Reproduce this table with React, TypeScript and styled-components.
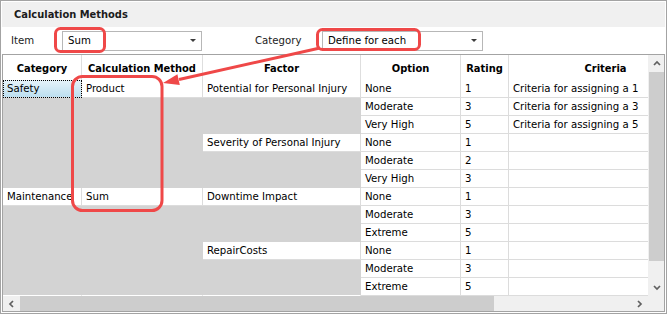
import React from "react";
import styled, { createGlobalStyle, css } from "styled-components";

const GlobalStyle = createGlobalStyle`
  html, body {
    margin: 0;
    padding: 0;
    background: #ffffff;
  }
  body {
    font-family: "DejaVu Sans Condensed", "Liberation Sans", sans-serif;
    font-size: 11.3px;
    color: #000;
  }
`;

type Entry = {
  category?: string;
  method?: string;
  factor?: string;
  option: string;
  rating: number;
  criteria?: string;
};

const rows: Entry[] = [
  { category: "Safety", method: "Product", factor: "Potential for Personal Injury", option: "None", rating: 1, criteria: "Criteria for assigning a 1" },
  { option: "Moderate", rating: 3, criteria: "Criteria for assigning a 3" },
  { option: "Very High", rating: 5, criteria: "Criteria for assigning a 5" },
  { factor: "Severity of Personal Injury", option: "None", rating: 1 },
  { option: "Moderate", rating: 2 },
  { option: "Very High", rating: 3 },
  { category: "Maintenance", method: "Sum", factor: "Downtime Impact", option: "None", rating: 1 },
  { option: "Moderate", rating: 3 },
  { option: "Extreme", rating: 5 },
  { factor: "RepairCosts", option: "None", rating: 1 },
  { option: "Moderate", rating: 3 },
  { option: "Extreme", rating: 5 },
];

const columns = ["Category", "Calculation Method", "Factor", "Option", "Rating", "Criteria"];

const Frame = styled.div`
  position: relative;
  box-sizing: border-box;
  width: 667px;
  height: 314px;
  border: 1px solid #a3a3a3;
  padding: 1px;
  display: flex;
  flex-direction: column;
  background: #fff;
`;

const TitleBar = styled.div`
  flex: none;
  height: 25px;
  display: flex;
  align-items: center;
  padding-left: 12px;
  background: #f0f0f0;
  font-size: 11px;
  font-weight: bold;
  color: #1c1c1c;
`;

const Toolbar = styled.div`
  flex: none;
  height: 27px;
  display: flex;
  align-items: center;
  padding-left: 9px;
  background: #fff;
`;

const FieldLabel = styled.span<{ $width: number; $offset?: number }>`
  width: ${(p) => p.$width}px;
  margin-left: ${(p) => p.$offset ?? 0}px;
  color: #1c1c1c;
`;

const Combo = styled.div<{ $width: number }>`
  box-sizing: border-box;
  width: ${(p) => p.$width}px;
  height: 20px;
  display: flex;
  align-items: center;
  padding-left: 5px;
  border: 1px solid #b7b7b7;
  background: #fff;
`;

const Caret = styled.span`
  margin-left: auto;
  margin-right: 5px;
  width: 0;
  height: 0;
  border-left: 3px solid transparent;
  border-right: 3px solid transparent;
  border-top: 3px solid #3c3c3c;
`;

const Grid = styled.div`
  flex: 1;
  display: flex;
  flex-direction: column;
  border: 1px solid #a3a3a3;
  background: #d3d3d3;
  overflow: hidden;
`;

const GridMain = styled.div`
  flex: 1;
  display: flex;
  min-height: 0;
`;

const Viewport = styled.div`
  width: 645px;
  flex: none;
  overflow: hidden;
`;

const columnTemplate = css`
  display: grid;
  grid-template-columns: 79px 121px 158px 100px 48px 194px;
  width: 700px;
`;

const HeaderRow = styled.div`
  ${columnTemplate};
  height: 25px;
  background: #fff;
`;

const HeadCell = styled.div`
  box-sizing: border-box;
  display: flex;
  align-items: center;
  justify-content: center;
  padding-top: 2px;
  border-right: 1px solid #dedede;
  font-size: 11px;
  font-weight: bold;
  white-space: nowrap;
`;

const BodyRow = styled.div`
  ${columnTemplate};
  height: 18px;
`;

const Cell = styled.div<{ $blank?: boolean; $selected?: boolean; $last?: boolean }>`
  box-sizing: border-box;
  height: 18px;
  padding-left: 4px;
  line-height: 17px;
  white-space: nowrap;
  overflow: hidden;
  background: #fff;
  border-right: 1px solid #dcdcdc;
  border-bottom: 1px solid #dcdcdc;

  ${(p) =>
    p.$blank &&
    css`
      background: #d3d3d3;
      border-color: transparent;
      border-bottom-color: ${p.$last ? "#ffffff" : "transparent"};
    `}

  ${(p) =>
    p.$selected &&
    css`
      background: linear-gradient(#e6f3fa, #bddff0);
      outline: 1px dotted #000;
      outline-offset: -1px;
    `}
`;

const VScroll = styled.div`
  width: 15px;
  flex: none;
  display: flex;
  flex-direction: column;
  border-left: 1px solid #f0f0f0;
  background: #f0f0f0;
`;

const ArrowButton = styled.div<{ $w: number; $h: number }>`
  flex: none;
  width: ${(p) => p.$w}px;
  height: ${(p) => p.$h}px;
  display: flex;
  align-items: center;
  justify-content: center;
  background: #f0f0f0;
`;

const VThumb = styled.div<{ $length: number }>`
  flex: none;
  height: ${(p) => p.$length}px;
  background: #cdcdcd;
`;

const HScrollRow = styled.div`
  flex: none;
  height: 15px;
  display: flex;
`;

const HScroll = styled.div`
  width: 645px;
  flex: none;
  display: flex;
  background: #f0f0f0;
`;

const HThumb = styled.div<{ $length: number }>`
  flex: none;
  width: ${(p) => p.$length}px;
  background: #cdcdcd;
`;

const Track = styled.div`
  flex: 1;
`;

const Corner = styled.div`
  flex: 1;
  background: #f0f0f0;
`;

const Overlay = styled.svg`
  position: absolute;
  top: -1px;
  left: -1px;
  pointer-events: none;
`;

type Dir = "up" | "down" | "left" | "right";

const chevronPoints: Record<Dir, string> = {
  up: "1,5 4,2 7,5",
  down: "1,2 4,5 7,2",
  left: "5,1 2,4 5,7",
  right: "2,1 5,4 2,7",
};

const Chevron = ({ dir }: { dir: Dir }) => (
  <svg width="8" height="8" viewBox="0 0 8 8">
    <polyline points={chevronPoints[dir]} fill="none" stroke="#606060" strokeWidth="1.7" />
  </svg>
);

const RED = "#ef4848";

export default function App() {
  return (
    <>
      <GlobalStyle />
      <Frame>
        <TitleBar>Calculation Methods</TitleBar>
        <Toolbar>
          <FieldLabel $width={51}>Item</FieldLabel>
          <Combo $width={140}>
            Sum
            <Caret />
          </Combo>
          <FieldLabel $width={67} $offset={53}>
            Category
          </FieldLabel>
          <Combo $width={161}>
            Define for each
            <Caret />
          </Combo>
        </Toolbar>
        <Grid>
          <GridMain>
            <Viewport>
              <HeaderRow>
                {columns.map((c) => (
                  <HeadCell key={c}>{c}</HeadCell>
                ))}
              </HeaderRow>
              {rows.map((r, i) => {
                const last = i === rows.length - 1;
                return (
                  <BodyRow key={i}>
                    <Cell $blank={!r.category} $selected={i === 0} $last={last}>
                      {r.category}
                    </Cell>
                    <Cell $blank={!r.method} $last={last}>
                      {r.method}
                    </Cell>
                    <Cell $blank={!r.factor} $last={last}>
                      {r.factor}
                    </Cell>
                    <Cell>{r.option}</Cell>
                    <Cell>{r.rating}</Cell>
                    <Cell>{r.criteria}</Cell>
                  </BodyRow>
                );
              })}
            </Viewport>
            <VScroll>
              <ArrowButton $w={15} $h={17}>
                <Chevron dir="up" />
              </ArrowButton>
              <VThumb $length={189} />
              <Track />
              <ArrowButton $w={15} $h={17}>
                <Chevron dir="down" />
              </ArrowButton>
            </VScroll>
          </GridMain>
          <HScrollRow>
            <HScroll>
              <ArrowButton $w={17} $h={15}>
                <Chevron dir="left" />
              </ArrowButton>
              <HThumb $length={474} />
              <Track />
              <ArrowButton $w={16} $h={15}>
                <Chevron dir="right" />
              </ArrowButton>
            </HScroll>
            <Corner />
          </HScrollRow>
        </Grid>
        <Overlay width="668" height="315" viewBox="0 0 668 315">
          <g fill="none" stroke={RED} strokeWidth="3">
            <rect x="55.5" y="28.5" width="49" height="23" rx="5" />
            <rect x="317.5" y="29.5" width="102" height="20" rx="5" />
            <rect x="72.5" y="76.5" width="89.5" height="134" rx="10" />
            <line x1="320" y1="48" x2="179" y2="79.5" />
          </g>
          <polygon points="163,83 179.8,84.9 177.4,74.2" fill={RED} />
        </Overlay>
      </Frame>
    </>
  );
}
